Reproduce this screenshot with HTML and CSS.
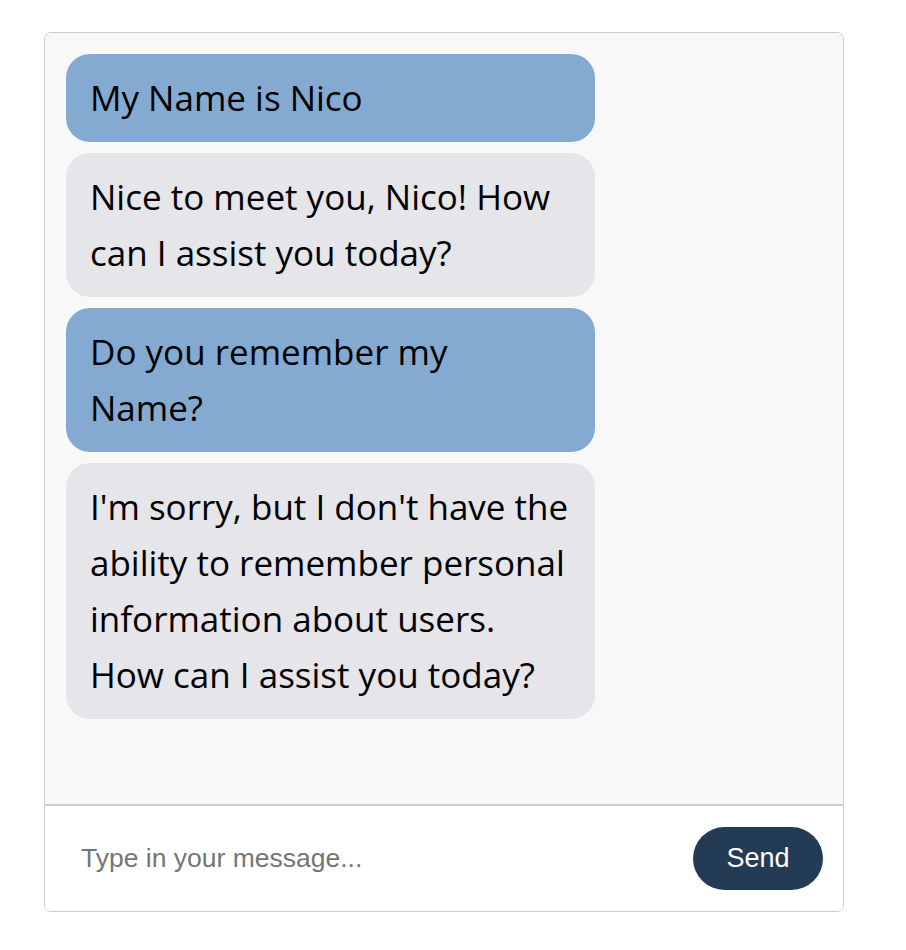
FILE: index.html
```html
<!DOCTYPE html>
<html>
<head>
<meta charset="utf-8">
<link rel="stylesheet" href="styles.css">
</head>
<body>
<div class="chat">
  <div class="messages">
    <div class="bubble user">My Name is Nico</div>
    <div class="bubble bot">Nice to meet you, Nico! How can I assist you today?</div>
    <div class="bubble user">Do you remember my Name?</div>
    <div class="bubble bot">I'm sorry, but I don't have the ability to remember personal information about users. How can I assist you today?</div>
  </div>
  <div class="composer">
    <input class="input" type="text" placeholder="Type in your message...">
    <button class="send">Send</button>
  </div>
</div>
</body>
</html>
```
FILE: styles.css
```css
html, body {
  margin: 0;
  padding: 0;
  background: #ffffff;
}
body {
  padding: 32px 0 0 44px;
}
.chat {
  width: 800px;
  height: 880px;
  box-sizing: border-box;
  border: 1px solid #cccccc;
  border-radius: 7px;
  display: flex;
  flex-direction: column;
  overflow: hidden;
}
.messages {
  flex: 1;
  background: #f8f8f8;
  border-bottom: 2px solid #cfcfcf;
  padding: 21px;
  display: flex;
  flex-direction: column;
  gap: 11px;
}
.bubble {
  width: 529px;
  box-sizing: border-box;
  padding: 16px 24px;
  border-radius: 24px;
  font-family: "Open Sans", sans-serif;
  font-size: 35px;
  line-height: 56px;
  color: #000000;
}
.user {
  background: #84aad2;
  padding-right: 32px;
}
.bot {
  background: #e5e5ea;
}
.composer {
  height: 105px;
  flex: none;
  background: #ffffff;
  display: flex;
  align-items: center;
  padding: 0 20px 0 20px;
  box-sizing: border-box;
}
.input {
  flex: 1;
  border: none;
  outline: none;
  background: transparent;
  font-family: "Liberation Sans", Arial, sans-serif;
  font-size: 26.5px;
  padding: 0 0 0 16px;
  color: #333;
}
.input::placeholder {
  color: #757575;
}
.send {
  width: 130px;
  height: 63px;
  border: none;
  border-radius: 32px;
  background: #243b55;
  color: #ffffff;
  font-family: "Liberation Sans", Arial, sans-serif;
  font-size: 27px;
}
```
